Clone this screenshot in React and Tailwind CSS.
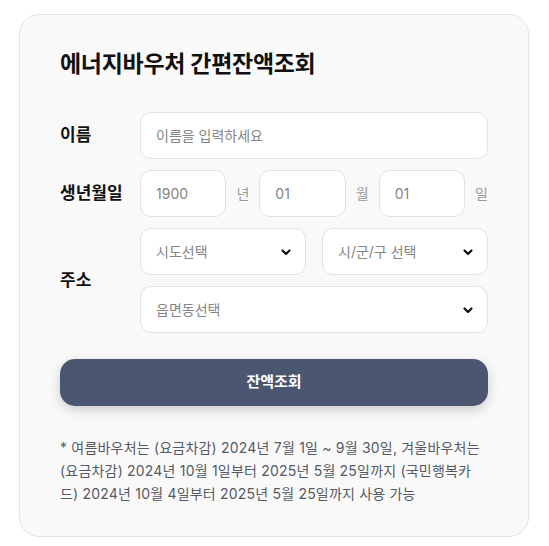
import React from "react";

const Chevron = () => (
  <svg width="12" height="12" viewBox="0 0 12 12" className="shrink-0">
    <polyline points="2.5,4.5 6,8 9.5,4.5" fill="none" stroke="#111" strokeWidth="2.2" strokeLinecap="round" strokeLinejoin="round" />
  </svg>
);

const Box = ({ children, className = "" }) => (
  <div className={`h-[47px] bg-white border border-[#e2e2e2] rounded-[11px] flex items-center px-[15px] text-[14px] text-[#858585] ${className}`}>
    {children}
  </div>
);

const Select = ({ label }) => (
  <Box className="justify-between pr-[13px]">
    <span>{label}</span>
    <Chevron />
  </Box>
);

export default function App() {
  return (
    <div
      className="w-[549px] h-[546px] bg-white pt-[14px] pl-[19px]"
      style={{ fontFamily: 'Inter, "Noto Sans CJK KR", sans-serif' }}
    >
      <div className="w-[510px] h-[523px] bg-[#f9f9f9] border border-[#e4e4e4] rounded-[20px] px-[40px] pt-[33px]">
        <h1 className="text-[23px] font-bold text-[#111] leading-[32px] tracking-[-0.3px]">에너지바우처 간편잔액조회</h1>

        <div className="mt-[32px] flex flex-col gap-[11px]">
          <div className="flex items-center">
            <div className="w-[80px] text-[17px] font-bold text-[#111]">이름</div>
            <Box className="flex-1">이름을 입력하세요</Box>
          </div>

          <div className="flex items-center">
            <div className="w-[80px] text-[17px] font-bold text-[#111]">생년월일</div>
            <div className="flex-1 flex items-center gap-[10px] text-[14px] text-[#999]">
              <Box className="flex-1">1900</Box>
              <span>년</span>
              <Box className="flex-1">01</Box>
              <span>월</span>
              <Box className="flex-1">01</Box>
              <span>일</span>
            </div>
          </div>

          <div className="flex items-center">
            <div className="w-[80px] text-[17px] font-bold text-[#111]">주소</div>
            <div className="flex-1 flex flex-col gap-[11px]">
              <div className="grid grid-cols-2 gap-[16px]">
                <Select label="시도선택" />
                <Select label="시/군/구 선택" />
              </div>
              <Select label="읍면동선택" />
            </div>
          </div>
        </div>

        <button className="mt-[26px] w-full h-[47px] rounded-[15px] bg-[#4b5670] text-white text-[15px] font-bold shadow-[0_4px_12px_rgba(0,0,0,0.18)]">
          잔액조회
        </button>

        <p className="mt-[30px] w-[424px] text-[14px] leading-[23px] tracking-[0.2px] text-[#555a64]">
          * 여름바우처는 (요금차감) 2024년 7월 1일 ~ 9월 30일, 겨울바우처는 (요금차감) 2024년 10월 1일부터 2025년 5월 25일까지 (국민행복카드) 2024년 10월 4일부터 2025년 5월 25일까지 사용 가능
        </p>
      </div>
    </div>
  );
}
